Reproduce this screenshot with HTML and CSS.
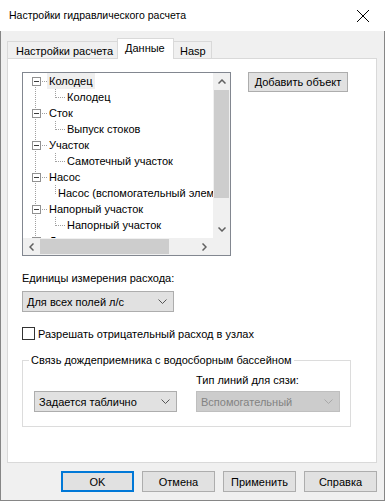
FILE: index.html
```html
<!DOCTYPE html>
<html lang="ru">
<head>
  <meta charset="UTF-8" />
  <title>Настройки гидравлического расчета</title>
  <link rel="stylesheet" href="styles.css">
</head>
<body>

<div class="window">
  <div class="titlebar">
    <span class="title">Настройки гидравлического расчета</span>
    <svg class="close" width="14" height="14" viewBox="0 0 14 14">
      <path d="M1 1L13 13M13 1L1 13" stroke="#000" stroke-width="1" fill="none"/>
    </svg>
  </div>

  <div class="body">
    <div class="tabs">
      <div class="tab">Настройки расчета</div>
      <div class="tab active">Данные</div>
      <div class="tab">Hasp</div>
    </div>

    <div class="panel">
      <div class="top-row">
        <div class="tree">
          <div class="tree-view">
            <div class="nodes">
              <div class="row root"><span class="exp"></span><span class="hline"></span><span class="label selected">Колодец</span></div>
              <div class="row child"><span class="elbow"></span><span class="label">Колодец</span></div>
              <div class="row root"><span class="exp"></span><span class="hline"></span><span class="label">Сток</span></div>
              <div class="row child"><span class="elbow"></span><span class="label">Выпуск стоков</span></div>
              <div class="row root"><span class="exp"></span><span class="hline"></span><span class="label">Участок</span></div>
              <div class="row child"><span class="elbow"></span><span class="label">Самотечный участок</span></div>
              <div class="row root"><span class="exp"></span><span class="hline"></span><span class="label">Насос</span></div>
              <div class="row child"><span class="elbow"></span><span class="label">Насос (вспомогательный элемент)</span></div>
              <div class="row root"><span class="exp"></span><span class="hline"></span><span class="label">Напорный участок</span></div>
              <div class="row child"><span class="elbow"></span><span class="label">Напорный участок</span></div>
              <div class="row root"><span class="exp"></span><span class="hline"></span><span class="label">Дождеприемник</span></div>
            </div>
          </div>
          <div class="vscroll">
            <span class="arrow">
              <svg width="8" height="5" viewBox="0 0 8 5"><path d="M0.5 4.5L4 1L7.5 4.5" stroke="#606060" stroke-width="1.5" fill="none"/></svg>
            </span>
            <span class="thumb"></span>
            <span class="track"></span>
            <span class="arrow">
              <svg width="8" height="5" viewBox="0 0 8 5"><path d="M0.5 0.5L4 4L7.5 0.5" stroke="#606060" stroke-width="1.5" fill="none"/></svg>
            </span>
          </div>
          <div class="hscroll">
            <span class="arrow">
              <svg width="5" height="8" viewBox="0 0 5 8"><path d="M4.5 0.5L1 4L4.5 7.5" stroke="#606060" stroke-width="1.5" fill="none"/></svg>
            </span>
            <span class="thumb"></span>
            <span class="track"></span>
            <span class="arrow">
              <svg width="5" height="8" viewBox="0 0 5 8"><path d="M0.5 0.5L4 4L0.5 7.5" stroke="#606060" stroke-width="1.5" fill="none"/></svg>
            </span>
          </div>
          <div class="corner"></div>
        </div>
        <button class="btn add">Добавить объект</button>
      </div>

      <div class="field-label">Единицы измерения расхода:</div>
      <div class="select units">
        <span>Для всех полей л/с</span>
        <svg width="9" height="5" viewBox="0 0 9 5"><path d="M0.5 0.5L4.5 4.5L8.5 0.5" stroke="#555" stroke-width="1" fill="none"/></svg>
      </div>

      <div class="check">
        <span class="box"></span>
        <span>Разрешать отрицательный расход в узлах</span>
      </div>

      <fieldset class="group">
        <legend>Связь дождеприемника с водосборным бассейном</legend>
        <div class="group-row">
          <div class="select link-mode">
            <span>Задается таблично</span>
            <svg width="9" height="5" viewBox="0 0 9 5"><path d="M0.5 0.5L4.5 4.5L8.5 0.5" stroke="#555" stroke-width="1" fill="none"/></svg>
          </div>
          <div class="col">
            <div class="col-label">Тип линий для сязи:</div>
            <div class="select disabled">
              <span>Вспомогательный</span>
              <svg width="9" height="5" viewBox="0 0 9 5"><path d="M0.5 0.5L4.5 4.5L8.5 0.5" stroke="#a8a8a8" stroke-width="1" fill="none"/></svg>
            </div>
          </div>
        </div>
      </fieldset>
    </div>

    <div class="buttons">
      <button class="btn default">OK</button>
      <button class="btn">Отмена</button>
      <button class="btn">Применить</button>
      <button class="btn">Справка</button>
    </div>
  </div>
</div>

</body>
</html>
```

FILE: styles.css
```css
body {
  margin: 0;
  font-family: "Liberation Sans", Arial, sans-serif;
  font-size: 11px;
  color: #000;
  background: #fff;
}
.window {
  width: 385px;
  height: 501px;
  display: flex;
  flex-direction: column;
}
/* Title bar */
.titlebar {
  height: 31px;
  flex: none;
  display: flex;
  align-items: center;
  justify-content: space-between;
  padding: 0 15px 0 9px;
  background: #fff;
}
.title {
  font-size: 10.5px;
  margin-top: -1px;
}
.body {
  flex: 1;
  background: #f0f0f0;
  border: 1px solid #868686;
  border-top: none;
  padding: 7px 7px 0 6px;
}
/* Tabs */
.tabs {
  display: flex;
  align-items: flex-end;
  height: 20px;
  white-space: nowrap;
}
.tab {
  height: 17px;
  box-sizing: border-box;
  border: 1px solid #d9d9d9;
  border-bottom: none;
  background: #f0f0f0;
  padding: 2px 0 0 8px;
  margin-right: -1px;
  line-height: 14px;
}
.tab:first-child {
  width: 111px;
}
.tab.active {
  position: relative;
  z-index: 1;
  height: 21px;
  margin-bottom: -1px;
  width: 57px;
  background: #fff;
  padding: 2px 0 0 7px;
}
.tab:last-child {
  width: 39px;
  padding-left: 6px;
}
.panel {
  height: 405px;
  box-sizing: border-box;
  background: #fff;
  border: 1px solid #d9d9d9;
  padding: 13px 0 0 14px;
}
/* Tree view */
.top-row {
  display: flex;
  align-items: flex-start;
  gap: 17px;
}
.tree {
  width: 209px;
  height: 184px;
  box-sizing: border-box;
  border: 1px solid #828790;
  display: grid;
  grid-template-columns: 190px 17px;
  grid-template-rows: 165px 17px;
}
.tree-view {
  overflow: hidden;
  white-space: nowrap;
}
.nodes {
  background-image: repeating-linear-gradient(to bottom, #a0a0a0 0 1px, transparent 1px 2px);
  background-repeat: no-repeat;
  background-position: 12px 8px;
  background-size: 1px 100%;
}
.row {
  height: 16px;
  display: flex;
  align-items: center;
}
.exp {
  width: 9px;
  height: 9px;
  box-sizing: border-box;
  margin-left: 9px;
  border: 1px solid #919191;
  background: #fff;
  display: flex;
  align-items: center;
  justify-content: center;
}
.exp::after {
  content: "";
  width: 5px;
  height: 1px;
  background: #3c3c3c;
}
.hline {
  width: 5px;
  height: 1px;
  margin-left: 1px;
  background: repeating-linear-gradient(to right, #a0a0a0 0 1px, transparent 1px 2px);
}
.label {
  height: 16px;
  line-height: 16px;
  padding: 0 2px;
}
.label.selected {
  background: #efefef;
}
.elbow {
  align-self: flex-start;
  width: 10px;
  height: 9px;
  margin-left: 32px;
  box-sizing: border-box;
  border-left: 1px dotted #a0a0a0;
  border-bottom: 1px dotted #a0a0a0;
}
.vscroll,
.hscroll {
  background: #f0f0f0;
  display: flex;
}
.vscroll {
  flex-direction: column;
}
.arrow {
  width: 17px;
  height: 17px;
  flex: none;
  display: flex;
  align-items: center;
  justify-content: center;
}
.vscroll .thumb {
  height: 108px;
  margin: 0 1px;
  background: #cdcdcd;
}
.hscroll .thumb {
  width: 129px;
  margin: 1px 0;
  background: #cdcdcd;
}
.track {
  flex: 1;
}
.corner {
  background: #f0f0f0;
}
/* Buttons */
.btn {
  font: inherit;
  color: #000;
  height: 21px;
  box-sizing: border-box;
  background: #e1e1e1;
  border: 1px solid #adadad;
  padding: 0;
}
.btn.add {
  width: 100px;
  height: 20px;
}
.btn.default {
  border: 2px solid #0078d7;
}
/* Form fields */
.field-label {
  margin-top: 15px;
  line-height: 15px;
}
.select {
  height: 21px;
  box-sizing: border-box;
  border: 1px solid #adadad;
  background: #e1e1e1;
  display: flex;
  align-items: center;
  justify-content: space-between;
  padding: 0 6px 0 4px;
}
.select.units {
  width: 152px;
  margin-top: 5px;
}
.select.link-mode {
  width: 143px;
}
.select.disabled {
  width: 144px;
  background: #cccccc;
  border-color: #bfbfbf;
  color: #838383;
}
.check {
  display: flex;
  align-items: center;
  gap: 3px;
  margin-top: 15px;
  height: 13px;
}
.check .box {
  width: 13px;
  height: 13px;
  box-sizing: border-box;
  border: 1px solid #333;
  background: #fff;
}
.group {
  width: 329px;
  box-sizing: border-box;
  margin: 13px 0 0;
  border: 1px solid #dcdcdc;
  padding: 5px 0 14px 11px;
  min-width: 0;
}
.group legend {
  padding: 0 2px;
  margin-left: -5px;
  line-height: 15px;
}
.group-row {
  display: flex;
  align-items: flex-end;
  gap: 19px;
}
.col-label {
  line-height: 15px;
  margin-bottom: 3px;
}
.buttons {
  display: flex;
  justify-content: flex-end;
  gap: 8px;
  margin: 8px 0 0;
}
.buttons .btn {
  width: 73px;
}
```
